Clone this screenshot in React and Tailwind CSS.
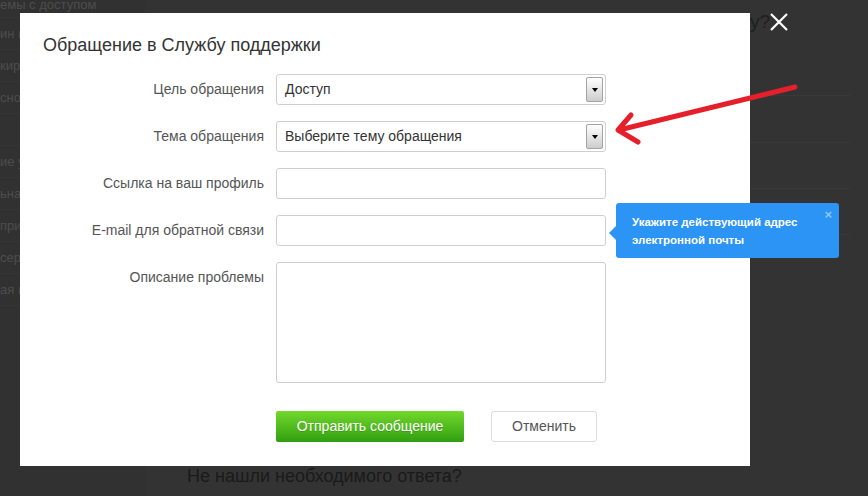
import React from "react";

const sideItems = [
  "емы с доступом",
  "ин и пароль",
  "кировка",
  "сновные",
  "",
  "ие услуги",
  "ьная страница",
  "приложения",
  "сервисы",
  "ая информация",
];

function SelectBox({ value }) {
  return (
    <div className="relative flex h-[31px] w-[330px] items-center rounded-[3px] border border-[#cfcfcf] bg-white pl-[8px] text-[14px] text-[#333]">
      {value}
      <div className="absolute right-[2px] top-[2px] flex h-[25px] w-[17px] items-center justify-center rounded-[2px] border border-[#a3a3a3] bg-linear-to-b from-white to-[#cdcdcd]">
        <div className="h-0 w-0 border-x-[3.5px] border-t-[4px] border-x-transparent border-t-black" />
      </div>
    </div>
  );
}

function Row({ label, children, top }) {
  return (
    <div className={`flex gap-[12px] ${top ? "items-start" : "items-center"}`}>
      <label className="w-[221px] text-right text-[14px] leading-[31px] text-[#555]">
        {label}
      </label>
      {children}
    </div>
  );
}

export default function App() {
  return (
    <div
      className="relative h-[496px] w-[868px] overflow-hidden bg-[#333]"
      style={{ fontFamily: '"Liberation Sans", Arial, sans-serif' }}
    >
      {/* page behind the overlay */}
      <div className="flex h-full">
        <div className="flex w-[145px] flex-col bg-[#313131] text-[13px] text-[#4d4d4d]">
          {sideItems.map((t, i) => (
            <div
              key={i}
              className="h-[32px] shrink-0 border-b border-[#363636] leading-[10px] first:h-[18px]"
            >
              <span className={i === 0 ? "" : "block pt-[11px]"}>{t}</span>
            </div>
          ))}
        </div>
        <div className="flex flex-1 flex-col">
          <div className="pr-[98px] pt-[8px] text-right text-[19px] text-[#1e1e1e]">
            Не нашли ответ на свой вопрос по доступу?
          </div>
          <div className="ml-auto mr-[18px] mt-[12px] flex w-[100px] flex-col">
            <div className="h-[47px] border-b border-[#393939]" />
            <div className="h-[47px] border-b border-[#393939]" />
            <div className="h-[46px] border-b border-[#393939]" />
            <div className="h-[46px] border-b border-[#393939]" />
          </div>
          <div className="mt-auto pb-[6px] pl-[42px] text-[18px] text-[#1a1a1a]">
            Не нашли необходимого ответа?
          </div>
        </div>
      </div>

      {/* close */}
      <button className="absolute left-[768px] top-[11px] h-[22px] w-[22px]">
        <svg viewBox="0 0 22 22" className="h-[22px] w-[22px]">
          <path d="M3 3 L19 19 M19 3 L3 19" stroke="#fff" strokeWidth="2.2" />
        </svg>
      </button>

      {/* modal */}
      <div className="absolute left-[20px] top-[13px] h-[453px] w-[730px] bg-white px-[23px] pt-[21px]">
        <h2 className="text-[18px] leading-[22px] text-[#333]">
          Обращение в Службу поддержки
        </h2>
        <div className="mt-[18px] flex flex-col gap-[16px]">
          <Row label="Цель обращения">
            <SelectBox value="Доступ" />
          </Row>
          <Row label="Тема обращения">
            <SelectBox value="Выберите тему обращения" />
          </Row>
          <Row label="Ссылка на ваш профиль">
            <input className="h-[31px] w-[330px] rounded-[3px] border border-[#cfcfcf] outline-none" />
          </Row>
          <Row label="E-mail для обратной связи">
            <input className="h-[31px] w-[330px] rounded-[3px] border border-[#cfcfcf] outline-none" />
          </Row>
          <Row label="Описание проблемы" top>
            <textarea className="h-[121px] w-[330px] resize-none rounded-[3px] border border-[#cfcfcf] outline-none" />
          </Row>
        </div>
        <div className="ml-[233px] mt-[28px] flex gap-[27px]">
          <button className="h-[31px] w-[188px] rounded-[2px] bg-linear-to-b from-[#72d92c] to-[#2f9f10] text-[14px] text-white [text-shadow:0_1px_0_rgba(0,0,0,0.15)]">
            Отправить сообщение
          </button>
          <button className="h-[31px] w-[106px] rounded-[3px] border border-[#dcdcdc] bg-white text-[14px] text-[#555]">
            Отменить
          </button>
        </div>
      </div>

      {/* tooltip */}
      <div className="absolute left-[616px] top-[203px] h-[55px] w-[223px] rounded-[3px] bg-[#2b94f4] pl-[16px] pt-[10px] text-[11.5px] font-bold leading-[18px] text-white">
        <div className="absolute left-[-7px] top-[23px] h-0 w-0 border-y-[7px] border-r-[7px] border-y-transparent border-r-[#2b94f4]" />
        <span className="absolute right-[7px] top-[3px] text-[13px] font-bold text-[#8cc6f9]">×</span>
        Укажите действующий адрес
        <br />
        электронной почты
      </div>

      {/* red arrow */}
      <svg className="pointer-events-none absolute left-0 top-0" width="868" height="496">
        <g stroke="#e5202b" strokeWidth="5" strokeLinecap="round" fill="none">
          <path d="M795 87 L619 130" />
          <path d="M631 115 L618 130 L638 142" strokeLinejoin="round" />
        </g>
      </svg>
    </div>
  );
}
